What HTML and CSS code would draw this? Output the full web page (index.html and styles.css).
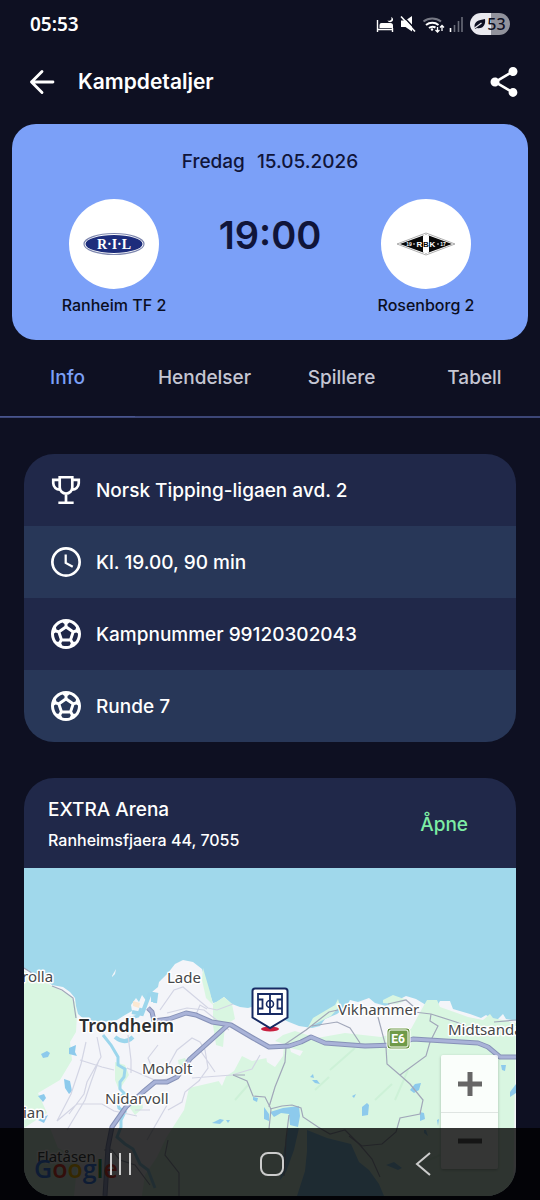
FILE: index.html
```html
<!DOCTYPE html>
<html lang="no">
<head>
  <meta charset="UTF-8">
  <meta name="viewport" content="width=device-width, initial-scale=1.0">
  <title>Kampdetaljer</title>
  <link rel="stylesheet" href="styles.css">
</head>
<body>
  <div class="status-bar">
    <span class="clock">05:53</span>
    <div class="status-icons">
      <svg width="90" height="24" viewBox="376 12 90 24" fill="none">
        <!-- bed -->
        <path d="M377.500 20v12M377 29.500h16M392.500 32v-4" stroke="#fff" stroke-width="1.400"/>
        <path d="M379.500 28v-3q0-2 2-2h9q2.500 0 2.500 2.500V28z" fill="#fff"/>
        <path d="M391 17c1.500 2.500-.5 4.500-3.500 3.500c1 2.500 5 2 5.500-.5c.3-1.500-.7-2.700-2-3z" fill="#fff"/>
        <!-- sound off -->
        <path d="M401 20.500h4.500l6.500-4.500v15.500L405.500 27H401z" fill="#fff"/>
        <path d="M402.500 15.500L416 30" stroke="#0e1022" stroke-width="1.500"/>
        <path d="M401 16.500L415 31.500" stroke="#fff" stroke-width="1.600"/>
        <!-- wifi -->
        <path d="M423.500 21.500a14 14 0 0 1 17.500 0" stroke="#777985" stroke-width="2"/>
        <path d="M426 25a10 10 0 0 1 12.500 0M429 28a6 6 0 0 1 6.500-.5" stroke="#fff" stroke-width="2"/>
        <circle cx="432" cy="29.500" r="1.200" fill="#fff"/>
        <path d="M437.500 27v4.500M435.500 30l2 2 2-2M442 31v-5M440 27.500l2-2 2 2" stroke="#fff" stroke-width="1.300"/>
        <!-- signal -->
        <path d="M450.500 32v-4" stroke="#fff" stroke-width="1.600"/>
        <path d="M454.500 32v-7M458.500 32v-11M462 32V17" stroke="#696b78" stroke-width="1.600"/>
      </svg>
      <span class="battery">
        <svg width="12" height="12" viewBox="0 0 12 12"><path d="M1 11C-1 5 3 2 11 1c1 7-3 10-8 9z" fill="#0e1022"/><path d="M0 10.500L7.500 5" stroke="#e9e9ef" stroke-width="1.200"/></svg>53
      </span>
    </div>
  </div>

  <header class="top-bar">
    <button class="icon-button" aria-label="Tilbake">
      <svg width="36" height="36" viewBox="0 0 24 24" fill="none" stroke="#fff" stroke-width="1.900" stroke-linecap="round" stroke-linejoin="round"><path d="M19.300 12H5M12 5l-7 7 7 7"/></svg>
    </button>
    <h1>Kampdetaljer</h1>
    <button class="icon-button" aria-label="Del">
      <svg width="36" height="36" viewBox="0 0 24 24" fill="#fff"><path d="M18 16.080c-.76 0-1.440.3-1.960.77L8.910 12.700c.05-.23.09-.46.09-.7s-.04-.47-.09-.7l7.050-4.110c.54.5 1.250.81 2.040.81 1.660 0 3-1.340 3-3s-1.340-3-3-3-3 1.340-3 3c0 .24.04.47.09.7L8.040 9.810C7.500 9.310 6.790 9 6 9c-1.660 0-3 1.340-3 3s1.340 3 3 3c.79 0 1.500-.31 2.040-.81l7.120 4.160c-.05.21-.08.43-.08.65 0 1.610 1.310 2.920 2.920 2.920s2.920-1.310 2.920-2.920-1.310-2.920-2.920-2.920z"/></svg>
    </button>
  </header>

  <section class="match-card">
    <p class="match-date"><span>Fredag</span><span>15.05.2026</span></p>
    <div class="teams">
      <div class="team">
        <div class="team-logo">
          <svg width="62" height="24" viewBox="0 0 62 24">
            <ellipse cx="31" cy="12" rx="30" ry="10.500" fill="#fff" stroke="#7d86ae" stroke-width="1.200"/>
            <ellipse cx="31" cy="12" rx="28.500" ry="9" fill="#1d2d7c"/>
            <text class="ril" x="31" y="17" text-anchor="middle">R·I·L</text>
          </svg>
        </div>
        <span class="team-name">Ranheim TF 2</span>
      </div>
      <div class="kickoff">19:00</div>
      <div class="team">
        <div class="team-logo">
          <svg width="60" height="24" viewBox="0 0 60 24">
            <path d="M1 12L30 1l29 11-29 11z" fill="#fff" stroke="#999" stroke-width=".8"/>
            <path d="M4 12L30 2.500 56 12 30 21.500z" fill="#090909"/>
            <path d="M27 3.500l3-1 3 1v17l-3 1-3-1z" fill="#fff"/>
            <g class="rbk" text-anchor="middle">
              <text x="23.500" y="15" fill="#fff">R</text>
              <text x="30" y="15" fill="#090909">B</text>
              <text x="36.500" y="15" fill="#fff">K</text>
            </g>
            <g class="rbk-year" text-anchor="middle" fill="#fff">
              <text x="13" y="13.500">19</text>
              <text x="47" y="13.500">17</text>
              <circle cx="18" cy="12" r=".8"/>
              <circle cx="42" cy="12" r=".8"/>
            </g>
          </svg>
        </div>
        <span class="team-name">Rosenborg 2</span>
      </div>
    </div>
  </section>

  <nav class="tabs">
    <a href="#info" class="active">Info</a>
    <a href="#hendelser">Hendelser</a>
    <a href="#spillere">Spillere</a>
    <a href="#tabell">Tabell</a>
  </nav>

  <main>
    <ul class="info-list" id="info">
      <li>
        <svg class="icon" viewBox="0 0 24 24" fill="none" stroke="#fff" stroke-width="1.800"><path d="M7.800 3.500h8.400v6.700a4.200 4.200 0 0 1-8.400 0zM7.800 5.300H3.500v2.200a4.300 4.300 0 0 0 4.600 4.200M16.200 5.300h4.300v2.200a4.300 4.300 0 0 1-4.600 4.200M12 14.400v6M6.900 20.500h10.200"/></svg>
        Norsk Tipping-ligaen avd. 2
      </li>
      <li>
        <svg class="icon" viewBox="0 0 24 24" fill="none" stroke="#fff"><circle cx="12" cy="12" r="9.100" stroke-width="1.800"/><path d="M11.800 7v5.600l4.700 2.600" stroke-width="1.500"/></svg>
        Kl. 19.00, 90 min
      </li>
      <li>
        <svg class="icon" viewBox="0 0 24 24" fill="#fff"><path id="ball" d="M12 2C6.480 2 2 6.480 2 12s4.480 10 10 10 10-4.480 10-10S17.520 2 12 2zm1 3.300l1.350-.95c1.820.56 3.370 1.760 4.380 3.340l-.39 1.340-1.350.46L13 6.700V5.300zm-3.350-.95L11 5.300v1.400L7.010 9.490l-1.350-.46-.39-1.340c1.010-1.570 2.560-2.770 4.380-3.340zM7.080 17.110l-1.140.1C4.730 15.810 4 13.990 4 12c0-.12.01-.23.02-.35l1-.73 1.380.48 1.460 4.340-.78 1.370zm7.420 2.480c-.79.26-1.630.41-2.500.41s-1.710-.15-2.500-.41l-.69-1.490.64-1.100h5.110l.64 1.110-.7 1.480zM14.270 15H9.730l-1.350-4.020L12 8.440l3.630 2.540L14.270 15zm3.790 2.210l-1.140-.1-.79-1.370 1.460-4.340 1.390-.47 1 .73c.01.11.02.22.02.34 0 1.990-.73 3.810-1.940 5.210z"/></svg>
        Kampnummer 99120302043
      </li>
      <li>
        <svg class="icon" viewBox="0 0 24 24" fill="#fff"><use href="#ball"/></svg>
        Runde 7
      </li>
    </ul>

    <section class="venue">
      <div class="venue-header">
        <div>
          <h2>EXTRA Arena</h2>
          <p>Ranheimsfjaera 44, 7055</p>
        </div>
        <a href="#kart">Åpne</a>
      </div>
      <div class="map" id="kart">
        <svg class="map-canvas" viewBox="24 868 492 328" preserveAspectRatio="xMidYMid slice">
          <rect x="24" y="868" width="492" height="328" fill="#a0d8eb"/>
          <!-- land -->
          <path fill="#f4f5f9" d="M24 968l11 7 9 4 8 6 11 2 7 5 5 6 1 8 2 8 7 6 10 1 8 1 14-2 8-5 7-4-1-6 5-7 3 4 3-7 5 7 5-10 6-5 1-5 9-9 7-9 8-4 10 2 9 7 3 10 4 12 4 12 4-1 7-5 8 7 8 3 8 1 7-2 10 4 10 6 14 6 10 4 13 2 8-2 5-7 12-5 10-8 3-6 8 2 11-4 6 5 11 3 10-5 10-5 10 3 10 6 10 3 4-7 10 0 3 8 17 5 11 4 5-3 10 6 7-7 3 5 23 4v174H24z"/>
          <!-- parks and forest -->
          <g fill="#d9f6e1">
            <path d="M24 971l11 5 17 10 18 9 5 7 2 13-1 17-6 10 2 18-12 20-22 13 9 20-23 15z"/>
            <path d="M24 1128h26l8 20 20 10-4 38H24z"/>
            <path d="M213 1004l11-7 8 7 3 15-10 6-2 22-7-2-3-20z"/>
            <path d="M203 968l7 24 3 13-7-7-4-18z"/>
            <path d="M516 1023l-23-5-3-4-7 6-15-3-11-4-17-6-3-7h-10l-4 7-12 22-30 8-36-4-28 5-22-7-12 4-8 6 15 5-6 2-7 7-10 3-15 3-10-5-8 15-15 10-30 7-5 22-18 28-9 19-12 18-4 27h372z"/>
            <path d="M313 1018l22-13 3-6 2 7-9 10-18 9-7 6zM383 1000l10-5 14 5-10 4-14-1z"/>
            <path d="M135 1115l8-7-2-15-8 5-3 10zM115 1062l10 3 4 10-10 15-4-10zM178 1060l7-2 3 5-9 3z"/>
          </g>
          <path fill="#f4f5f9" d="M264 1043l20 3-1 10-8 11-8-5zM290 1048l13 3-3 5-9-4zM197 1063l30 11-5 12-6-9-22-7z"/>
          <g fill="none" stroke="#cdf1d7" stroke-width="2">
            <path d="M330 1070l25-22M315 1090l14-13M375 1100l17-16M235 1100l14-16M395 1100l13-30M418 1165l22-10"/>
          </g>
          <!-- lakes, river and harbour -->
          <g fill="#8dcaec">
            <path d="M41 1054l6-3 3 2-2 4-5 1zM69 1048l7-3-1 7 2 4-8-2zM64 1079l6 2 2 10-3 3-4-6zM38 1096l6-2 2 4-3 4zM38 1120l10-5-4 8z"/>
            <path d="M212 1123l8-4 4 1-4 4zM226 1120l4 0-2 3zM253 1097l5 1-1 4-4-2zM264 1107l5 7v7l-5-2zM270 1112l13-4 16-2 1 10-2 11-8-2-1-11-8-1-7 4z"/>
            <path d="M288 1128l11 0-5 22-8 22-6 8 4-30z"/>
            <path d="M307 1130l20 8 24 6 8 18 10 8 10 14 5 12H297l8-25 2-20z"/>
            <path d="M362 1107l5-4 2 2-1 10-6 1zM352 1096l4-2-2 4zM410 1090l5-6 6-1-2 7-5 3zM420 1112l4 1 1 6-5 2zM501 1065l5 0-1 6-3-1zM510 1092l6-8v9l-6 4zM437 1120l2-1-1 7zM386 1165l8-3 8 6-4 2zM312 1080l5 0 3 4-5-1zM310 1077l3-3 1 4zM424 1130l2 0 2 6-4-3z"/>
          </g>
          <path d="M112 976l4-7-1 5-3 3z" fill="#f4f5f9"/>
          <g fill="none" stroke="#9cd6ec" stroke-width="3">
            <path d="M103 1035l8 10 7 12 0 8 7 4-1 8-4 5 0 7 5 5-8 4 2 10 6 4-4 8 0 7-4 10 8 7 8 5 7 15 8 6 7 18"/>
            <path d="M115 1037c6 5 12 6 18 0M132 1012l10 2 8-21M153 1002v-8l5 1M156 995l-1 8" stroke-width="4"/>
            <path d="M128 1019l10-3 3-8"/>
          </g>
          <path d="M133 1001l7 2-1 5-6-2z" fill="#fbe8d2"/>
          <!-- small roads -->
          <g fill="none" stroke="#d3d5e4" stroke-width="1.200">
            <path d="M160 1010l14-20 9-3 25 21 9 2 16-6M167 1013l20-5 17 2 25 20M195 1017l5-12 7 4M86 1042l-5 22-10 30-14 27 20-17 25 0 12 7 23 5M80 1060l22 7 12 3M97 1037l4 20-14 25-3 12-15 20M128 1035l3 25 0 13M158 1045l-10 13 5 12 14-2 10-18 15-12 8 4 5 8 3 18-10 14M200 1050l15 22M260 1055l-8 14-20 6-40 3M150 1110l-15 0M200 1080l-15 12-3 10-14 8M167 1105l-20 35M127 1068l30 13 15-3M99 1060l-8 22-6 18-18 30"/>
          </g>
          <g fill="none" stroke="#a1a7b9" stroke-width="1.200">
            <path d="M24 968l11 7M52 986l10 4 11 8 3 20M233 1075l14 6 6 15 12 1 6 12-2 20M270 1109l12-3 10-1 9 3 2 9 15 10 12 7 15-4 15 15 12 14 8 18"/>
            <path d="M284 1045l22-15 23-18 22-5M360 1043l-10-15-13-6-25 4M378 1017l8 30 1 17 14 12 9 8 13 16-3 14-20 4-4 14-14 12-20 2-13-10M388 1004l18-4 8 7M414 1012l17 2 25 8 10 4M516 1020l-22 2M431 1014l-1 7 8 5-8 16-4 14-26 19M286 1047l-1 15-10 25-6 20M289 1115l-3 24-2 37M104 1150l8 0 8 10 15 5 15 20M168 1140l-3 15 14 18 0 23M245 1075l-12 0"/>
          </g>
          <!-- E6 -->
          <g fill="none" stroke-linejoin="round">
            <path class="road-edge" d="M148 1008l4 4 2 9 15-2 17-6 10 2 16 7 19 3 22 13 16 9 20-1 12-4 10-5 14 6 40 3 30-1 18-6 65 4 10 4 12 10 16 0M229 1024l-39 35-13 18-10 5-12 0-12 10-17 15-14 20-4 20-3 49"/>
            <path class="road-fill" d="M148 1008l4 4 2 9 15-2 17-6 10 2 16 7 19 3 22 13 16 9 20-1 12-4 10-5 14 6 40 3 30-1 18-6 65 4 10 4 12 10 16 0M229 1024l-39 35-13 18-10 5-12 0-12 10-17 15-14 20-4 20-3 49"/>
          </g>
          <rect x="387" y="1028" width="23" height="21" rx="3" fill="#6f9a49" stroke="#fff"/>
          <rect x="389" y="1030" width="19" height="17" rx="2" fill="none" stroke="#fff"/>
          <text class="road-sign" x="398" y="1043" text-anchor="middle">E6</text>
          <!-- places -->
          <g class="place">
            <text x="22" y="982">rolla</text>
            <text x="167" y="983">Lade</text>
            <text class="city" x="79" y="1032">Trondheim</text>
            <text x="142" y="1074">Moholt</text>
            <text x="105" y="1104">Nidarvoll</text>
            <text x="338" y="1015">Vikhammer</text>
            <text x="448" y="1035">Midtsanda</text>
            <text x="23" y="1118">ian</text>
            <text x="37" y="1162">Flatåsen</text>
          </g>
          <!-- stadium pin -->
          <ellipse cx="270" cy="1029" rx="9" ry="2.500" fill="#c9203f"/>
          <path d="M255 988.500h30q2.500 0 2.500 2.500v26.500L270 1028l-17.500-10.500V991q0-2.500 2.500-2.500z" fill="#fff" stroke="#172a63" stroke-width="2"/>
          <path d="M258 994h24v20h-24zM270 994v20M258 999.500h4.500v9H258M282 999.500h-4.500v9h4.500" fill="none" stroke="#172a63" stroke-width="1.800"/>
          <circle cx="270" cy="1004" r="3.500" fill="none" stroke="#172a63" stroke-width="1.600"/>
          <text class="google" x="34" y="1178"><tspan fill="#4285f4">G</tspan><tspan fill="#ea4335">o</tspan><tspan fill="#fbbc05">o</tspan><tspan fill="#4285f4">g</tspan><tspan fill="#34a853">l</tspan><tspan fill="#ea4335">e</tspan></text>
        </svg>
        <div class="zoom-controls">
          <button aria-label="Zoom inn"><svg width="26" height="26" viewBox="0 0 26 26"><path d="M13 1v24M1 13h24" stroke="#666" stroke-width="5"/></svg></button>
          <button aria-label="Zoom ut"><svg width="26" height="26" viewBox="0 0 26 26"><path d="M1 13h24" stroke="#666" stroke-width="5"/></svg></button>
        </div>
      </div>
    </section>
  </main>

  <div class="system-nav">
    <button aria-label="Siste apper"><svg width="30" height="30" viewBox="0 0 30 30"><path d="M6 4v22M15 4v22M25 4v22" stroke="#ccc" stroke-width="2"/></svg></button>
    <button aria-label="Hjem"><svg width="30" height="30" viewBox="0 0 30 30"><rect x="4" y="4" width="22" height="22" rx="7" fill="none" stroke="#ccc" stroke-width="2"/></svg></button>
    <button aria-label="Tilbake"><svg width="30" height="30" viewBox="0 0 30 30"><path d="M22 4L9 15l13 11" fill="none" stroke="#ccc" stroke-width="2"/></svg></button>
  </div>
</body>
</html>
```
FILE: styles.css
```css
* { box-sizing: border-box; }
body {
  margin: 0;
  padding-bottom: 4px;
  background: #0e1022;
  color: #fff;
  font-family: Inter, "Liberation Sans", sans-serif;
  font-size: 19px;
  font-weight: 500;
}
h1, h2, p, ul { margin: 0; padding: 0; }
a { color: inherit; text-decoration: none; }
button {
  padding: 0;
  border: none;
  background: none;
  font: inherit;
  cursor: pointer;
}
svg { display: block; }

.status-bar {
  display: flex;
  align-items: center;
  justify-content: space-between;
  height: 48px;
  padding: 0 30px;
}
.clock {
  font-family: "Noto Sans", sans-serif;
  font-size: 19px;
  font-weight: 600;
}
.status-icons {
  display: flex;
  align-items: center;
  gap: 4px;
}
.battery {
  display: flex;
  align-items: center;
  justify-content: center;
  gap: 1px;
  width: 40px;
  height: 22px;
  border-radius: 11px;
  background: linear-gradient(to right, #e9e9ef 52%, #91929c 52%);
  color: #0e1022;
  font-family: "Noto Sans", sans-serif;
  font-size: 16px;
}

.top-bar {
  display: flex;
  align-items: center;
  height: 68px;
  padding: 0 18px 0 24px;
}
.top-bar h1 {
  flex: 1;
  margin-left: 18px;
  font-size: 21px;
  font-weight: 600;
  line-height: 32px;
}

.match-card {
  margin: 8px 12px 0;
  height: 216px;
  padding: 24px 12px;
  border-radius: 24px;
  background: #7ba0f8;
  color: #10153a;
}
.match-date {
  display: flex;
  justify-content: center;
  gap: 12px;
  line-height: 28px;
}
.teams {
  display: flex;
  justify-content: space-between;
  margin-top: 23px;
}
.team {
  display: flex;
  flex-direction: column;
  align-items: center;
  width: 180px;
}
.team-logo {
  display: flex;
  align-items: center;
  justify-content: center;
  width: 90px;
  height: 90px;
  border-radius: 50%;
  background: #fff;
}
.team-name {
  margin-top: 4px;
  color: #0b0e22;
  font-size: 16px;
  line-height: 24px;
}
.kickoff {
  font-size: 38px;
  font-weight: 600;
  line-height: 72px;
}
.ril {
  font: bold 14px "Liberation Serif", serif;
  fill: #fff;
}
.rbk { font: bold 8px "Liberation Sans", sans-serif; }
.rbk-year { font: bold 5px "Liberation Sans", sans-serif; }

.tabs {
  display: grid;
  grid-template-columns: 135fr 139fr 135fr 131fr;
  height: 78px;
  border-bottom: 2px solid #3c4677;
  color: #c5c6d3;
  text-align: center;
  line-height: 76px;
}
.tabs .active {
  border-bottom: 1px solid #48558f;
  color: #7ba0f8;
}

main { padding: 36px 24px 0; }
.info-list {
  border-radius: 30px;
  overflow: hidden;
  list-style: none;
}
.info-list li {
  display: flex;
  align-items: center;
  gap: 12px;
  height: 72px;
  padding: 0 24px;
  background: #202849;
}
.info-list li:nth-child(even) { background: #283758; }
.icon {
  width: 36px;
  height: 36px;
}

.venue {
  margin-top: 36px;
  border-radius: 30px;
  overflow: hidden;
  background: #202849;
}
.venue-header {
  display: flex;
  align-items: center;
  justify-content: space-between;
  height: 90px;
  padding: 2px 48px 0 24px;
}
.venue-header h2 {
  font-size: 19px;
  font-weight: 500;
  line-height: 32px;
}
.venue-header p {
  font-size: 16px;
  line-height: 28px;
}
.venue-header a { color: #7deda5; }

.map { position: relative; }
.map-canvas {
  width: 100%;
  height: 328px;
}
.road-edge {
  stroke: #8792b8;
  stroke-width: 5;
}
.road-fill {
  stroke: #a9b3d8;
  stroke-width: 3;
}
.road-sign {
  font: bold 12px Roboto, sans-serif;
  fill: #fff;
}
.place {
  font: 15px "Noto Sans", sans-serif;
  fill: #454749;
  stroke: #fff;
  stroke-width: 3px;
  stroke-linejoin: round;
  paint-order: stroke;
}
.place .city {
  font-size: 18px;
  font-weight: 600;
  fill: #2c2e30;
}
.google { font: 600 25px "Open Sans", sans-serif; }
.zoom-controls {
  position: absolute;
  right: 18px;
  bottom: 27px;
  display: flex;
  flex-direction: column;
  border-radius: 2px;
  background: rgba(255, 255, 255, 0.85);
  box-shadow: 0 1px 3px rgba(0, 0, 0, 0.25);
}
.zoom-controls button {
  display: flex;
  align-items: center;
  justify-content: center;
  width: 57px;
  height: 57px;
}
.zoom-controls button + button { border-top: 1px solid #dfe5e2; }

.system-nav {
  position: fixed;
  left: 0;
  right: 0;
  bottom: 0;
  display: flex;
  align-items: center;
  justify-content: space-between;
  height: 72px;
  padding: 0 102px 0 105px;
  background: rgba(0, 0, 0, 0.79);
}
```
